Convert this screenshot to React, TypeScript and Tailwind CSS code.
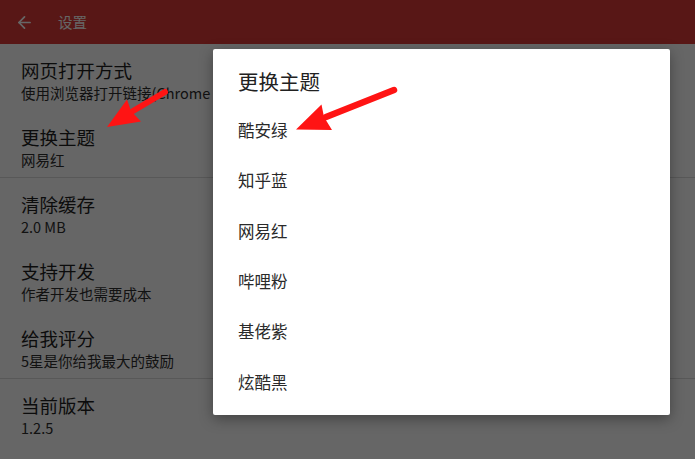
import { ArrowLeft } from "lucide-react";

const settings = [
  { title: "网页打开方式", sub: "使用浏览器打开链接(Chrome自定义标签页)", divider: false },
  { title: "更换主题", sub: "网易红", divider: true },
  { title: "清除缓存", sub: "2.0 MB", divider: false },
  { title: "支持开发", sub: "作者开发也需要成本", divider: false },
  { title: "给我评分", sub: "5星是你给我最大的鼓励", divider: true },
  { title: "当前版本", sub: "1.2.5", divider: false },
];

const themes = ["酷安绿", "知乎蓝", "网易红", "哔哩粉", "基佬紫", "炫酷黑"];

const font = { fontFamily: '"Noto Sans CJK SC", "Noto Sans", Roboto, sans-serif' };

const App = () => {
  return (
    <div className="relative w-[695px] h-[459px] overflow-hidden bg-white" style={font}>
      {/* App bar */}
      <div className="h-[44px] bg-[#dc3b37] flex items-center px-[15px] text-white">
        <ArrowLeft size={19} strokeWidth={2.2} />
        <span className="ml-[24px] text-[14.5px]">设置</span>
      </div>

      {/* Settings list */}
      <div className="flex flex-col">
        {settings.map((item) => (
          <div
            key={item.title}
            className={`h-[67px] pt-[13px] pl-[21px] whitespace-nowrap ${
              item.divider ? "border-b border-[#dcdcdc]" : ""
            }`}
          >
            <div className="text-[18.5px] leading-[26px] text-[#1e1e1e]">{item.title}</div>
            <div className="max-w-[190px] overflow-hidden text-[14.5px] leading-[20px] text-[#2e2e2e]">
              {item.sub}
            </div>
          </div>
        ))}
      </div>

      {/* Scrim */}
      <div className="absolute inset-0 bg-black/60" />

      {/* Dialog */}
      <div className="absolute left-[213px] top-[49px] w-[457px] h-[366px] bg-white rounded-[2px] shadow-[0_4px_14px_rgba(0,0,0,0.35)]">
        <div className="h-[56px] pt-[18px] pl-[25px] text-[20.5px] leading-[28px] text-[#212121]">
          更换主题
        </div>
        <div className="flex flex-col">
          {themes.map((t) => (
            <div key={t} className="h-[50.4px] flex items-center pl-[25px] text-[16.5px] text-[#2a2a2a]">
              {t}
            </div>
          ))}
        </div>
      </div>

      {/* Annotation arrows */}
      <svg className="absolute inset-0 pointer-events-none" width="695" height="459" viewBox="0 0 695 459">
        <line x1="165" y1="92" x2="133" y2="111" stroke="#ff1414" strokeWidth="6" strokeLinecap="round" />
        <polygon points="107,127 127,99.5 131,111 141,121.5" fill="#ff1414" />
        <line x1="394" y1="90" x2="326" y2="117" stroke="#ff1414" strokeWidth="6.5" strokeLinecap="round" />
        <polygon points="296,129.5 321.5,104.5 324,117 332,130" fill="#ff1414" />
      </svg>
    </div>
  );
};

export default App;
